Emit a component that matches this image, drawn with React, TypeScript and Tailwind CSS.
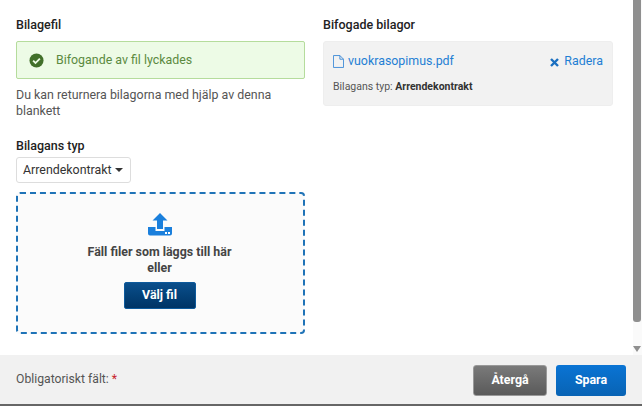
export default function App() {
  return (
    <div className="w-[642px] h-[406px] overflow-hidden bg-white flex flex-col font-['Roboto',sans-serif] text-[#444]">
      <div className="h-[355px] flex">
        <div className="w-[633px] flex gap-[18px] pl-4 pt-[17px]">
          <div className="w-[289px] flex flex-col">
            <h2 className="text-[12.5px] leading-[15px] font-medium text-[#222]">Bilagefil</h2>
            <div className="mt-[9px] h-[38px] flex items-center pl-[12px] gap-[12px] bg-[#edfbe6] border border-[#b5dc9c] rounded-[2px] text-[12.4px] text-[#5b8a3f]">
              <svg width="15" height="15" viewBox="0 0 16 16">
                <circle cx="8" cy="8" r="7.5" fill="#42702a" />
                <path d="M4.4 8.2l2.5 2.5 4.7-4.8" fill="none" stroke="#edfbe6" strokeWidth="2" />
              </svg>
              <span>Bifogande av fil lyckades</span>
            </div>
            <p className="mt-[8px] text-[12.4px] leading-4 text-[#555]">Du kan returnera bilagorna med hjälp av denna blankett</p>
            <h2 className="mt-[19px] text-[12.5px] leading-[15px] font-medium text-[#222]">Bilagans typ</h2>
            <div className="mt-[4px] w-[115px] h-[26px] flex items-center pl-[6px] gap-[3px] border border-[#ddd] rounded-[3px] text-[12.4px] text-[#333]">
              <span>Arrendekontrakt</span>
              <span className="w-0 h-0 border-x-[4px] border-x-transparent border-t-[4px] border-t-[#333]" />
            </div>
            <div className="mt-[9px] h-[142px] flex flex-col items-center border-2 border-dashed border-[#1f73b7] rounded-[4px] bg-[#fbfbfb] pt-[19px] pr-[2px]">
              <svg width="24" height="23" viewBox="0 0 24 23" fill="#1a7fdc">
                <path d="M12 0l7.5 7.5H15V16H9V7.5H4.5z" />
                <path d="M0 14h7.5v4h9v-4H24v6.5a2 2 0 0 1-2 2H2a2 2 0 0 1-2-2z" />
                <rect x="17" y="19" width="2" height="2" fill="#fff" />
                <rect x="20" y="19" width="2" height="2" fill="#fff" />
              </svg>
              <p className="mt-[8px] w-[170px] text-center text-[12.4px] leading-4 font-bold text-[#444]">Fäll filer som läggs till här eller</p>
              <button className="mt-[6px] w-[72px] h-[27px] rounded-[2px] bg-gradient-to-b from-[#0b4f8c] to-[#003465] border border-[#0d5a9c] text-white text-[12.4px] font-bold">Välj fil</button>
            </div>
          </div>
          <div className="w-[290px] flex flex-col">
            <h2 className="text-[12.5px] leading-[15px] font-medium text-[#222]">Bifogade bilagor</h2>
            <div className="mt-[9px] h-[65px] bg-[#f2f2f2] border border-[#eee] rounded-[3px] px-[9px] pt-[11px]">
              <div className="flex items-center justify-between h-[17px]">
                <div className="flex items-center gap-[4px] text-[#1f7fd4] text-[12.4px]">
                  <svg width="11" height="13" viewBox="0 0 12 14" fill="none" stroke="#3d8ad6" strokeWidth="1">
                    <path d="M1 .5h6.5L11.5 4.5v9H.5V.5z" />
                    <path d="M7.5.5v4h4" />
                  </svg>
                  <span>vuokrasopimus.pdf</span>
                </div>
                <div className="flex items-center gap-[5px] text-[#1f7fd4] text-[12.4px]">
                  <svg width="9" height="9" viewBox="0 0 9 9" className="mt-[2px]">
                    <path d="M1 1l7 7M8 1L1 8" stroke="#1a6fc0" strokeWidth="2.4" />
                  </svg>
                  <span>Radera</span>
                </div>
              </div>
              <p className="mt-[10px] text-[10.5px] leading-[13px] text-[#555]">Bilagans typ: <b className="font-bold text-[#333]">Arrendekontrakt</b></p>
            </div>
          </div>
        </div>
        <div className="w-[9px] flex flex-col items-start bg-[#fafafa]">
          <div className="w-[8px] h-[322px] bg-[#8f8f8f] rounded-b-[3px]" />
          <span className="mt-[24px] w-0 h-0 border-x-[4px] border-x-transparent border-t-[6px] border-t-[#8f8f8f]" />
        </div>
      </div>
      <div className="h-[49px] bg-[#f1f1f1] flex items-center justify-between pl-4 pr-[16px]">
        <span className="text-[12.2px] text-[#555]">Obligatoriskt fält: <span className="text-[#c8242b]">*</span></span>
        <div className="flex gap-[9px] mt-[1px]">
          <button className="w-[74px] h-[31px] rounded-[3px] border border-[#999] bg-gradient-to-b from-[#7a7a7a] to-[#5a5a5a] text-white text-[12.4px] font-bold">Återgå</button>
          <button className="w-[70px] h-[31px] rounded-[3px] bg-gradient-to-b from-[#0a74d4] to-[#0863b4] text-white text-[12.4px] font-bold">Spara</button>
        </div>
      </div>
      <div className="h-[2px] bg-[#666]" />
    </div>
  );
}
